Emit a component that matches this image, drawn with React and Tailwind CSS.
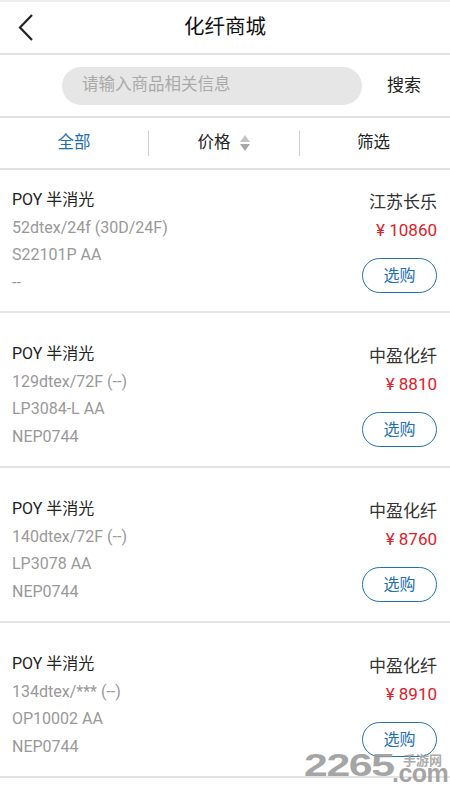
import React from "react";

const items = [
  { spec: "52dtex/24f (30D/24F)", code: "S22101P AA", extra: "--", maker: "江苏长乐", price: "10860", first: true },
  { spec: "129dtex/72F (--)", code: "LP3084-L AA", extra: "NEP0744", maker: "中盈化纤", price: "8810" },
  { spec: "140dtex/72F (--)", code: "LP3078 AA", extra: "NEP0744", maker: "中盈化纤", price: "8760" },
  { spec: "134dtex/*** (--)", code: "OP10002 AA", extra: "NEP0744", maker: "中盈化纤", price: "8910" },
];

function Item({ it }) {
  return (
    <div className={`flex justify-between border-b-2 border-[#e4e4e4] pl-[12px] pr-[13px] ${it.first ? "pt-[16px] pb-[15px]" : "pt-[27px] pb-[16px]"}`}>
      <div className="flex flex-col text-[16px] leading-[27.5px]">
        <div className="text-[#222]">POY 半消光</div>
        <div className="text-[#999]">{it.spec}</div>
        <div className="text-[#999]">{it.code}</div>
        <div className="text-[#999]">{it.extra}</div>
      </div>
      <div className="flex flex-col items-end">
        <div className="text-[17px] leading-[28px] mt-[2px] text-[#333]">{it.maker}</div>
        <div className="text-[17px] leading-[28px] text-[#e0202a]">¥ {it.price}</div>
        <div className="mt-[14px] w-[75px] h-[35px] rounded-full border-[1.5px] border-[#1f6fb5] flex items-center justify-center text-[16px] text-[#1f6fb5]">选购</div>
      </div>
    </div>
  );
}

export default function App() {
  return (
    <div className="w-[450px] h-[800px] bg-white overflow-hidden relative" style={{ fontFamily: 'Roboto, "Noto Sans CJK SC", sans-serif' }}>
      <div className="h-[2px] bg-[#eeeeee]" />
      <div className="h-[53px] relative flex items-center justify-center border-b-[2px] border-[#e2e2e2]">
        <svg className="absolute left-[16px] top-[11px]" width="20" height="30" viewBox="0 0 20 30">
          <path d="M16 2 L4 14.5 L16 27" fill="none" stroke="#222" strokeWidth="2.2" />
        </svg>
        <div className="text-[20.5px] text-[#111]">化纤商城</div>
      </div>
      <div className="h-[63px] flex items-center border-b-[2px] border-[#e2e2e2]">
        <div className="ml-[62px] w-[300px] h-[38px] rounded-full bg-[#e6e6e6] flex items-center pl-[20px] text-[16.5px] text-[#aaaaaa]">请输入商品相关信息</div>
        <div className="ml-[25px] text-[17px] text-[#222]">搜索</div>
      </div>
      <div className="h-[52px] flex items-center border-b-[2px] border-[#e2e2e2]">
        <div className="w-[148px] flex justify-center text-[16.5px] text-[#1f6fb5]">全部</div>
        <div className="w-px h-[25px] bg-[#cfcfcf]" />
        <div className="flex-1 flex justify-center items-center gap-[8px] text-[16.5px] text-[#222]">
          <span>价格</span>
          <svg width="12" height="18" viewBox="0 0 12 18">
            <path d="M6 1 L11 8 L1 8 Z" fill="#c4c4c4" />
            <path d="M6 17 L11 10 L1 10 Z" fill="#a8a8a8" />
          </svg>
        </div>
        <div className="w-px h-[25px] bg-[#cfcfcf]" />
        <div className="w-[150px] flex justify-center pr-[3px] text-[16.5px] text-[#222]">筛选</div>
      </div>
      {items.map((it, i) => (
        <Item key={i} it={it} />
      ))}
      <div className="absolute left-[304px] top-[746px] text-[31px] leading-[40px] font-black text-[#9c9c9c] opacity-90 scale-x-[1.38] origin-left tracking-[-1px]" style={{ fontFamily: '"Liberation Sans", sans-serif' }}>2265</div>
      <div className="absolute left-[392px] top-[758px] text-[25px] leading-[30px] font-bold text-[#9c9c9c] opacity-90 tracking-[-0.5px]" style={{ fontFamily: '"Liberation Sans", sans-serif' }}>.com</div>
      <div className="absolute left-[403px] top-[752px] text-[13px] leading-[16px] font-bold text-[#a4a4a4] opacity-90" style={{ fontFamily: '"Noto Sans CJK SC", sans-serif' }}>手游网</div>
    </div>
  );
}
